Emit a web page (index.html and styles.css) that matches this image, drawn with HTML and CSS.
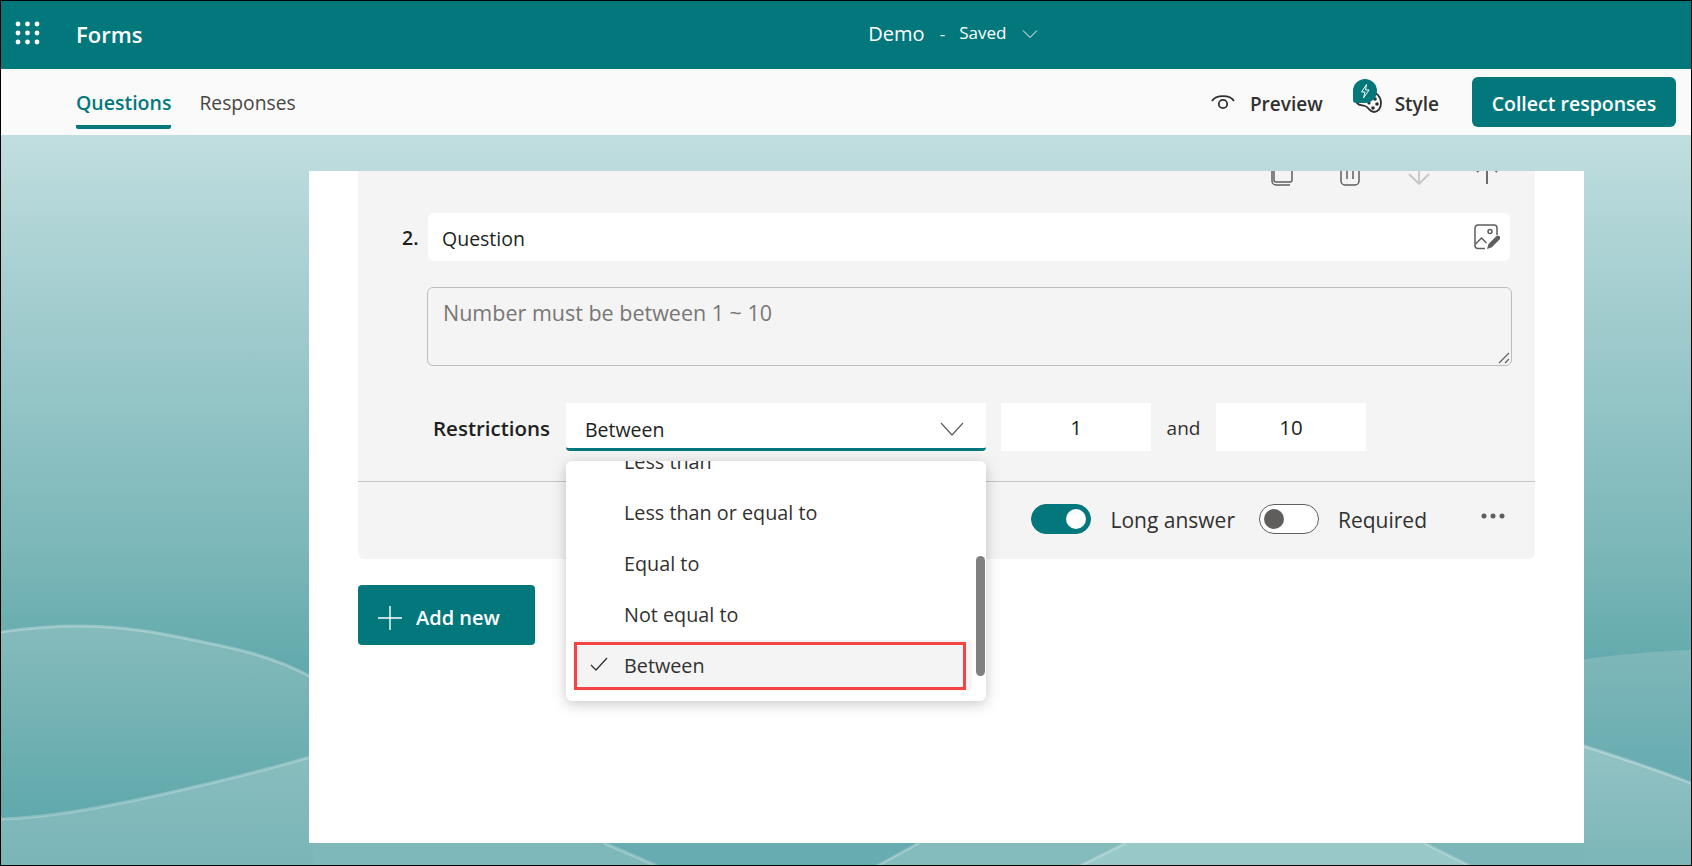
FILE: index.html
```html
<!DOCTYPE html>
<html lang="en">
<head>
    <meta charset="UTF-8">
    <title>Forms - Demo</title>
    <link rel="stylesheet" href="styles.css">
</head>
<body>
<div class="frame">

    <header class="topbar">
        <svg class="waffle" width="26" height="24" viewBox="0 0 26 24" fill="#fff">
            <circle cx="3" cy="3" r="2.4"/><circle cx="12.5" cy="3" r="2.4"/><circle cx="22" cy="3" r="2.4"/>
            <circle cx="3" cy="12" r="2.4"/><circle cx="12.5" cy="12" r="2.4"/><circle cx="22" cy="12" r="2.4"/>
            <circle cx="3" cy="21" r="2.4"/><circle cx="12.5" cy="21" r="2.4"/><circle cx="22" cy="21" r="2.4"/>
        </svg>
        <div class="app-name">Forms</div>
        <div class="doc-title">
            <span class="doc-name">Demo</span>
            <span class="doc-dash">-</span>
            <span class="doc-state">Saved</span>
            <svg width="16" height="10" viewBox="0 0 16 10" fill="none" stroke="#fff" stroke-width="1"><path d="M1 1.5l7 7 7-7"/></svg>
        </div>
    </header>

    <nav class="tabbar">
        <a class="tab tab-active">Questions</a>
        <a class="tab">Responses</a>
        <div class="actions">
            <a class="action action-preview">
                <svg width="24" height="16" viewBox="0 0 24 16" fill="none" stroke="#323130" stroke-width="1.8"><path d="M1 7C5 .5 19 .5 23 7"/><circle cx="12" cy="10" r="4.2"/></svg>
                Preview
            </a>
            <a class="action action-style">
                <svg width="30" height="34" viewBox="0 0 30 34">
                    <path d="M4 24C8 19 12 13 17 13c7 0 11 5 11 11 0 5-3 9-7 9-5 0-5-5-9-6-3-1-6 0-8-3z" fill="none" stroke="#323130" stroke-width="1.8"/>
                    <circle cx="22" cy="20" r="1.8" fill="#323130"/><circle cx="24" cy="25" r="1.8" fill="#323130"/><circle cx="20" cy="29" r="1.8" fill="#323130"/><circle cx="16" cy="24" r="1.6" fill="#323130"/>
                    <path d="M12 0a12 12 0 0 1 0 24H3a3 3 0 0 1-3-3V12A12 12 0 0 1 12 0z" fill="#03787c"/>
                    <path d="M13.500 5.500l-5 7.500h3.500l-1.500 6 5.500-8h-3.500z" fill="none" stroke="#fff" stroke-width="1"/>
                </svg>
                Style
            </a>
            <button class="collect-btn">Collect responses</button>
        </div>
    </nav>

    <main class="stage">
        <svg class="backdrop" viewBox="0 135 1690 730" preserveAspectRatio="none">
            <defs>
                <linearGradient id="skyFill" gradientUnits="userSpaceOnUse" x1="0" y1="135" x2="0" y2="866">
                    <stop offset="0" stop-color="#c1dedf"/>
                    <stop offset="0.17" stop-color="#aad1d3"/>
                    <stop offset="0.58" stop-color="#7ab6b8"/>
                    <stop offset="0.75" stop-color="#5fa8aa"/>
                    <stop offset="1" stop-color="#5fa8aa"/>
                </linearGradient>
                <linearGradient id="waveFill" gradientUnits="userSpaceOnUse" x1="0" y1="625" x2="0" y2="815">
                    <stop offset="0" stop-color="#86bbbc"/>
                    <stop offset="1" stop-color="#60a9ac"/>
                </linearGradient>
                <linearGradient id="lowFill" gradientUnits="userSpaceOnUse" x1="0" y1="755" x2="0" y2="866">
                    <stop offset="0" stop-color="#89bdbe"/>
                    <stop offset="1" stop-color="#7ab5b8"/>
                </linearGradient>
                <linearGradient id="rightFill" gradientUnits="userSpaceOnUse" x1="0" y1="650" x2="0" y2="790">
                    <stop offset="0" stop-color="#7fb7b9"/>
                    <stop offset="1" stop-color="#64abb0"/>
                </linearGradient>
                <linearGradient id="rightLow" gradientUnits="userSpaceOnUse" x1="0" y1="750" x2="0" y2="866">
                    <stop offset="0" stop-color="#92c2c4"/>
                    <stop offset="1" stop-color="#7cb6b8"/>
                </linearGradient>
            </defs>
            <rect x="0" y="135" width="1692" height="731" fill="url(#skyFill)"/>
            <!-- left waves -->
            <path d="M0 632C50 625 100 622 167 635S270 655 312 678V866H0z" fill="url(#waveFill)"/>
            <path d="M0 819C50 818 110 806 167 793S270 769 312 756V866H0z" fill="url(#lowFill)"/>
            <path d="M0 632C50 625 100 622 167 635S270 655 312 678" fill="none" stroke="#fff" stroke-opacity=".28" stroke-width="3"/>
            <path d="M0 819C50 818 110 806 167 793S270 769 312 756" fill="none" stroke="#fff" stroke-opacity=".25" stroke-width="3"/>
            <!-- right waves -->
            <path d="M1580 660C1620 654 1660 651 1692 650V866H1580z" fill="url(#rightFill)"/>
            <path d="M1580 745C1620 758 1660 771 1692 784V866H1580z" fill="url(#rightLow)"/>
            <path d="M1580 745C1620 758 1660 771 1692 784" fill="none" stroke="#fff" stroke-opacity=".3" stroke-width="3"/>
            <!-- strip under the card -->
            <rect x="312" y="843" width="1270" height="23" fill="#7fb8ba"/>
            <path d="M603 843L656 866H876L918 843z" fill="#66acb0"/>
            <path d="M918 843L876 866H1079L1125 843z" fill="#84bbbc"/>
            <path d="M1125 843L1079 866H1469L1423 843z" fill="#99c8c9"/>
            <path d="M1423 843L1469 866H1584V843z" fill="#7cb6b8"/>
            <path d="M603 843L656 866M918 843L876 866M1125 843L1079 866M1423 843L1469 866" fill="none" stroke="#fff" stroke-opacity=".25" stroke-width="3"/>
        </svg>

        <section class="sheet">
            <div class="question">
                <div class="q-tools">
                    <svg width="24" height="34" viewBox="0 0 24 34" fill="none" stroke="#605e5c" stroke-width="1.5"><path d="M6 2h14a2 2 0 0 1 2 2v24a2 2 0 0 1-2 2H6a2 2 0 0 1-2-2V4a2 2 0 0 1 2-2z"/><path d="M2 12v17a4 4 0 0 0 4 4h14"/></svg>
                    <svg width="24" height="34" viewBox="0 0 24 34" fill="none" stroke="#605e5c" stroke-width="1.5"><path d="M3 2v27a4 4 0 0 0 4 4h10a4 4 0 0 0 4-4V2"/><path d="M9 10v17M15 10v17"/></svg>
                    <svg width="24" height="34" viewBox="0 0 24 34" fill="none" stroke="#c8c6c4" stroke-width="1.8"><path d="M12 0v32M2 22l10 10 10-10"/></svg>
                    <svg width="24" height="34" viewBox="0 0 24 34" fill="none" stroke="#605e5c" stroke-width="1.8"><path d="M12 0v32M2 20L12 10l10 10"/></svg>
                </div>

                <div class="q-title">
                    <span class="q-num">2.</span>
                    <div class="q-input">
                        Question
                        <svg class="q-image" width="26" height="26" viewBox="0 0 26 26" fill="none" stroke="#605e5c" stroke-width="1.5">
                            <path d="M11 24.500H4a3 3 0 0 1-3-3V4a3 3 0 0 1 3-3h16a3 3 0 0 1 3 3v7"/>
                            <circle cx="16" cy="7.500" r="2"/>
                            <path d="M1.500 20l6-6 5 5"/>
                            <path d="M13 25l1.500-5 8-8a2.400 2.400 0 0 1 3.300 3.300l-8 8z" fill="#605e5c" stroke="none"/>
                        </svg>
                    </div>
                </div>

                <div class="q-hint">
                    Number must be between 1 ~ 10
                    <svg class="q-grip" width="12" height="12" viewBox="0 0 12 12" stroke="#605e5c" stroke-width="1.2"><path d="M1 11L11 1M7 11l4-4"/></svg>
                </div>

                <div class="q-rules">
                    <span class="rules-label">Restrictions</span>
                    <div class="select">
                        <span>Between</span>
                        <svg width="24" height="14" viewBox="0 0 24 14" fill="none" stroke="#605e5c" stroke-width="1.2"><path d="M1 1l11 12L23 1"/></svg>

                        <div class="menu">
                            <ul class="menu-list">
                                <li class="menu-item">Less than</li>
                                <li class="menu-item">Less than or equal to</li>
                                <li class="menu-item">Equal to</li>
                                <li class="menu-item">Not equal to</li>
                                <li class="menu-item menu-item-on">
                                    <svg class="menu-check" width="18" height="14" viewBox="0 0 18 14" fill="none" stroke="#323130" stroke-width="1.3"><path d="M1 8l5 5L17 1"/></svg>
                                    Between
                                    <span class="callout"></span>
                                </li>
                            </ul>
                            <div class="menu-thumb"></div>
                        </div>
                    </div>
                    <div class="num-box">1</div>
                    <span class="and">and</span>
                    <div class="num-box">10</div>
                </div>

                <div class="q-footer">
                    <span class="toggle toggle-on"><i></i></span>
                    <span class="toggle-text">Long answer</span>
                    <span class="toggle"><i></i></span>
                    <span class="toggle-text">Required</span>
                    <svg class="more" width="24" height="6" viewBox="0 0 24 6" fill="#605e5c"><circle cx="3" cy="3" r="2.500"/><circle cx="12" cy="3" r="2.500"/><circle cx="21" cy="3" r="2.500"/></svg>
                </div>
            </div>

            <button class="add-btn">
                <svg width="24" height="24" viewBox="0 0 24 24" stroke="#fff" stroke-width="1.4"><path d="M12 0v24M0 12h24"/></svg>
                Add new
            </button>
        </section>
    </main>

</div>
</body>
</html>
```

FILE: styles.css
```css
* {
    box-sizing: border-box;
    margin: 0;
    padding: 0;
}

body {
    font-family: "Open Sans", "Noto Sans", sans-serif;
    font-size: 19.5px;
    color: #201f1e;
    overflow: hidden;
}

.frame {
    width: 1692px;
    height: 866px;
    border: 1px solid #000;
    display: flex;
    flex-direction: column;
}

/* Top bar */
.topbar {
    height: 68px;
    flex: none;
    background: #03787c;
    color: #fff;
    display: flex;
    align-items: center;
    padding-left: 14px;
}

.waffle {
    margin-top: -4px;
}

.app-name {
    margin-left: 35px;
    font-size: 22px;
    font-weight: 600;
    margin-top: -3px;
}

.doc-title {
    margin-left: 726px;
    display: flex;
    align-items: center;
    margin-top: -4px;
}

.doc-name {
    font-size: 20px;
}

.doc-dash {
    margin-left: 15px;
    font-size: 17px;
}

.doc-state {
    margin-left: 14px;
    font-size: 17px;
    margin-top: -2px;
}

.doc-title svg {
    margin-left: 16px;
    margin-top: 2px;
}

/* Tabs */
.tabbar {
    height: 66px;
    flex: none;
    background: #fafafa;
    display: flex;
    align-items: center;
    padding: 0 15px 0 75px;
}

.tab {
    color: #484644;
    font-size: 19.3px;
    margin-right: 28px;
    height: 60px;
    line-height: 68px;
    align-self: flex-start;
    border-bottom: 4px solid transparent;
}

.tab-active {
    color: #03787c;
    font-size: 19.5px;
    font-weight: 600;
    border-bottom-color: #03787c;
    border-radius: 0 0 2px 2px;
}

.actions {
    margin-left: auto;
    display: flex;
    align-items: center;
}

.action {
    display: flex;
    align-items: center;
    color: #323130;
    font-size: 19px;
    font-weight: 600;
    padding-top: 3px;
}

.action-preview svg {
    margin: 0 15px 4px 0;
}

.action-style {
    margin-left: 30px;
}

.action-style svg {
    margin: -16px 12px 0 0;
}

.collect-btn {
    margin-left: 33px;
    width: 204px;
    height: 50px;
    padding-top: 3px;
    background: #03787c;
    color: #fff;
    border: none;
    border-radius: 6px;
    font-family: inherit;
    font-size: 19.5px;
    font-weight: 600;
}

/* Canvas with waves behind the sheet */
.stage {
    flex: 1;
    display: grid;
    overflow: hidden;
}

.backdrop {
    grid-area: 1 / 1;
    width: 100%;
    height: 100%;
}

.sheet {
    grid-area: 1 / 1;
    z-index: 1;
    width: 1275px;
    height: 672px;
    margin: 36px 0 0 308px;
    background: #fff;
    padding: 0 49px;
}

/* Question card */
.question {
    height: 388px;
    background: #f4f4f4;
    border-radius: 0 0 6px 6px;
}

.q-tools {
    height: 42px;
    overflow: hidden;
    display: flex;
    justify-content: flex-end;
    align-items: flex-end;
    gap: 44.5px;
    padding: 0 36px 27px 0;
}

.q-tools svg {
    flex: none;
}

.q-title {
    display: flex;
    align-items: center;
    padding-left: 44px;
}

.q-num {
    font-weight: 600;
    width: 26px;
}

.q-input {
    width: 1082px;
    height: 48px;
    background: #fff;
    border-radius: 6px;
    display: flex;
    align-items: center;
    justify-content: space-between;
    padding: 2px 10px 0 14px;
}

.q-image {
    margin-top: -3px;
}

.q-hint {
    position: relative;
    width: 1085px;
    height: 79px;
    margin: 26px 0 0 69px;
    padding: 11px 15px;
    border: 1px solid #bdbdbd;
    border-radius: 6px;
    color: #797775;
    font-size: 21.5px;
    line-height: 28px;
}

.q-grip {
    position: absolute;
    right: 1px;
    bottom: 1px;
}

.q-rules {
    display: flex;
    align-items: center;
    margin-top: 37px;
    padding-left: 75px;
}

.rules-label {
    width: 133px;
    font-size: 20.5px;
    font-weight: 600;
    margin-top: 2px;
}

.select {
    position: relative;
    width: 420px;
    height: 48px;
    background: #fff;
    border-bottom: 3px solid #03787c;
    border-radius: 0 0 4px 4px;
    display: flex;
    align-items: center;
    justify-content: space-between;
    padding: 7px 22px 0 19px;
}

.num-box {
    width: 150px;
    height: 48px;
    background: #fff;
    text-align: center;
    font-size: 20.5px;
    line-height: 49px;
}

.select + .num-box {
    margin-left: 15px;
}

.and {
    width: 65px;
    padding-top: 2px;
    text-align: center;
    font-size: 19px;
    color: #323130;
}

/* Open dropdown */
.menu {
    position: absolute;
    z-index: 2;
    left: 0;
    top: 58px;
    width: 420px;
    height: 240px;
    background: #fff;
    border-radius: 6px;
    box-shadow: 0 3px 14px rgba(0, 0, 0, 0.22);
    overflow: hidden;
}

.menu-list {
    list-style: none;
    margin-top: -25px;
}

.menu-item {
    position: relative;
    height: 51px;
    line-height: 52px;
    padding-left: 51px;
    margin: 0 14px 0 7px;
    font-size: 19.8px;
    color: #323130;
}

.menu-item-on {
    background: #f4f4f4;
    border-radius: 4px;
}

.menu-check {
    position: absolute;
    left: 17px;
    top: 17px;
}

.callout {
    position: absolute;
    left: 1px;
    top: 2px;
    width: 392px;
    height: 48px;
    border: 3px solid #f44444;
}

.menu-thumb {
    position: absolute;
    right: 1px;
    top: 95px;
    width: 9px;
    height: 120px;
    background: #808080;
    border-radius: 5px;
}

/* Footer of the question */
.q-footer {
    margin-top: 30px;
    height: 77px;
    border-top: 1px solid #c8c6c4;
    display: flex;
    align-items: center;
    justify-content: flex-end;
    padding: 0 30px 3px 0;
}

.toggle {
    width: 60px;
    height: 30px;
    border: 1px solid #605e5c;
    border-radius: 15px;
    background: #fff;
    padding: 4px;
    flex: none;
}

.toggle i {
    display: block;
    width: 20px;
    height: 20px;
    border-radius: 50%;
    background: #605e5c;
}

.toggle-on {
    background: #03787c;
    border-color: #03787c;
}

.toggle-on i {
    background: #fff;
    margin-left: auto;
}

.toggle-text {
    margin: 0 24px 0 19px;
    padding-top: 2px;
    font-size: 21px;
    color: #323130;
}

.more {
    margin: -6px 0 0 30px;
}

.add-btn {
    display: flex;
    align-items: center;
    gap: 14px;
    width: 177px;
    height: 60px;
    margin-top: 26px;
    padding: 5px 0 0 20px;
    background: #03787c;
    color: #fff;
    border: none;
    border-radius: 4px;
    font-family: inherit;
    font-size: 20px;
    font-weight: 600;
}
```
